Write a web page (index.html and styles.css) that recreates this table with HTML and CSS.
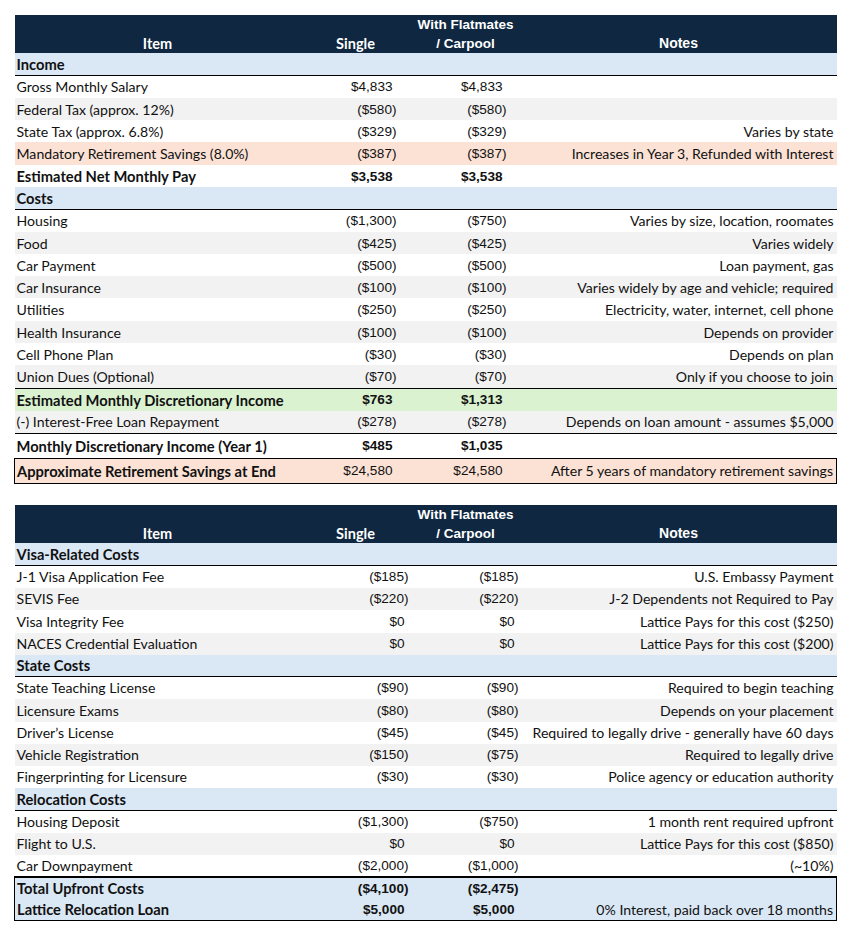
FILE: index.html
```html
<!DOCTYPE html>
<html>
<head>
<meta charset="utf-8">
<link rel="stylesheet" href="styles.css">
</head>
<body>
<div class="page">
<table class="sheet t1">
  <colgroup><col class="c-item"><col class="c-single"><col class="c-flat"><col class="c-notes"></colgroup>
  <thead>
    <tr class="hdr"><th class="h-aptos">Item</th><th class="h-aptos">Single</th><th class="h-arial">With Flatmates<br>/ Carpool</th><th class="h-arial">Notes</th></tr>
  </thead>
  <tbody>
    <tr class="sec h22"><td class="lbl b" colspan="4">Income</td></tr>
    <tr class="h23"><td class="lbl">Gross Monthly Salary</td><td class="num pos">$4,833</td><td class="num pos">$4,833</td><td class="note"></td></tr>
    <tr class="gray h22"><td class="lbl">Federal Tax (approx. 12%)</td><td class="num">($580)</td><td class="num">($580)</td><td class="note"></td></tr>
    <tr class="h22"><td class="lbl">State Tax (approx. 6.8%)</td><td class="num">($329)</td><td class="num">($329)</td><td class="note">Varies by state</td></tr>
    <tr class="pink h23"><td class="lbl">Mandatory Retirement Savings (8.0%)</td><td class="num">($387)</td><td class="num">($387)</td><td class="note">Increases in Year 3, Refunded with Interest</td></tr>
    <tr class="h22"><td class="lbl b">Estimated Net Monthly Pay</td><td class="num pos b">$3,538</td><td class="num pos b">$3,538</td><td class="note"></td></tr>
    <tr class="sec h22"><td class="lbl b" colspan="4">Costs</td></tr>
    <tr class="h23"><td class="lbl">Housing</td><td class="num">($1,300)</td><td class="num">($750)</td><td class="note">Varies by size, location, roomates</td></tr>
    <tr class="gray h22"><td class="lbl">Food</td><td class="num">($425)</td><td class="num">($425)</td><td class="note">Varies widely</td></tr>
    <tr class="h22"><td class="lbl">Car Payment</td><td class="num">($500)</td><td class="num">($500)</td><td class="note">Loan payment, gas</td></tr>
    <tr class="gray h22"><td class="lbl">Car Insurance</td><td class="num">($100)</td><td class="num">($100)</td><td class="note">Varies widely by age and vehicle; required</td></tr>
    <tr class="h23"><td class="lbl">Utilities</td><td class="num">($250)</td><td class="num">($250)</td><td class="note">Electricity, water, internet, cell phone</td></tr>
    <tr class="gray h22"><td class="lbl">Health Insurance</td><td class="num">($100)</td><td class="num">($100)</td><td class="note">Depends on provider</td></tr>
    <tr class="h22"><td class="lbl">Cell Phone Plan</td><td class="num">($30)</td><td class="num">($30)</td><td class="note">Depends on plan</td></tr>
    <tr class="gray h23 line"><td class="lbl">Union Dues (Optional)</td><td class="num">($70)</td><td class="num">($70)</td><td class="note">Only if you choose to join</td></tr>
    <tr class="green h23"><td class="lbl b">Estimated Monthly Discretionary Income</td><td class="num pos b">$763</td><td class="num pos b">$1,313</td><td class="note"></td></tr>
    <tr class="gray h22 line"><td class="lbl">(-) Interest-Free Loan Repayment</td><td class="num">($278)</td><td class="num">($278)</td><td class="note">Depends on loan amount - assumes $5,000</td></tr>
    <tr class="h25"><td class="lbl b">Monthly Discretionary Income (Year 1)</td><td class="num pos b">$485</td><td class="num pos b">$1,035</td><td class="note"></td></tr>
    <tr class="pink h25 boxed"><td class="lbl b">Approximate Retirement Savings at End</td><td class="num pos">$24,580</td><td class="num pos">$24,580</td><td class="note">After 5 years of mandatory retirement savings</td></tr>
  </tbody>
</table>

<table class="sheet t2">
  <colgroup><col class="c-item"><col class="c-single"><col class="c-flat"><col class="c-notes"></colgroup>
  <thead>
    <tr class="hdr"><th class="h-aptos">Item</th><th class="h-aptos">Single</th><th class="h-arial">With Flatmates<br>/ Carpool</th><th class="h-arial">Notes</th></tr>
  </thead>
  <tbody>
    <tr class="sec h23"><td class="lbl b" colspan="4">Visa-Related Costs</td></tr>
    <tr class="h22"><td class="lbl">J-1 Visa Application Fee</td><td class="num">($185)</td><td class="num">($185)</td><td class="note">U.S. Embassy Payment</td></tr>
    <tr class="gray h22"><td class="lbl">SEVIS Fee</td><td class="num">($220)</td><td class="num">($220)</td><td class="note">J-2 Dependents not Required to Pay</td></tr>
    <tr class="h23"><td class="lbl">Visa Integrity Fee</td><td class="num pos">$0</td><td class="num pos">$0</td><td class="note">Lattice Pays for this cost ($250)</td></tr>
    <tr class="gray h22"><td class="lbl">NACES Credential Evaluation</td><td class="num pos">$0</td><td class="num pos">$0</td><td class="note">Lattice Pays for this cost ($200)</td></tr>
    <tr class="sec h22"><td class="lbl b" colspan="4">State Costs</td></tr>
    <tr class="h22"><td class="lbl">State Teaching License</td><td class="num">($90)</td><td class="num">($90)</td><td class="note">Required to begin teaching</td></tr>
    <tr class="gray h23"><td class="lbl">Licensure Exams</td><td class="num">($80)</td><td class="num">($80)</td><td class="note">Depends on your placement</td></tr>
    <tr class="h22"><td class="lbl">Driver’s License</td><td class="num">($45)</td><td class="num">($45)</td><td class="note">Required to legally drive - generally have 60 days</td></tr>
    <tr class="gray h22"><td class="lbl">Vehicle Registration</td><td class="num">($150)</td><td class="num">($75)</td><td class="note">Required to legally drive</td></tr>
    <tr class="h22"><td class="lbl">Fingerprinting for Licensure</td><td class="num">($30)</td><td class="num">($30)</td><td class="note">Police agency or education authority</td></tr>
    <tr class="sec h23"><td class="lbl b" colspan="4">Relocation Costs</td></tr>
    <tr class="h22"><td class="lbl">Housing Deposit</td><td class="num">($1,300)</td><td class="num">($750)</td><td class="note">1 month rent required upfront</td></tr>
    <tr class="gray h22"><td class="lbl">Flight to U.S.</td><td class="num pos">$0</td><td class="num pos">$0</td><td class="note">Lattice Pays for this cost ($850)</td></tr>
    <tr class="h22"><td class="lbl">Car Downpayment</td><td class="num">($2,000)</td><td class="num">($1,000)</td><td class="note">(~10%)</td></tr>
    <tr class="blue h22 tot-top"><td class="lbl b">Total Upfront Costs</td><td class="num b">($4,100)</td><td class="num b">($2,475)</td><td class="note"></td></tr>
    <tr class="blue h22 tot-bot"><td class="lbl b">Lattice Relocation Loan</td><td class="num pos b">$5,000</td><td class="num pos b">$5,000</td><td class="note">0% Interest, paid back over 18 months</td></tr>
  </tbody>
</table>
</div>
</body>
</html>
```

FILE: styles.css
```css
html, body {
  margin: 0;
  padding: 0;
  background: #ffffff;
}

.page {
  padding: 15px 14px 0 14px;
  display: flex;
  flex-direction: column;
  gap: 21px;
  width: 822px;
}

.sheet {
  border-collapse: collapse;
  table-layout: fixed;
  width: 822px;
  color: #111111;
}

.c-item { width: 286px; }
.c-single { width: 110px; }
.c-flat { width: 110px; }
.c-notes { width: 316px; }

.sheet td, .sheet th {
  padding: 0;
  white-space: nowrap;
  overflow: visible;
}

.hdr {
  height: 38px;
  background: #0f2740;
}

.hdr th {
  color: #ffffff;
  vertical-align: bottom;
  text-align: center;
  line-height: 19px;
  padding-bottom: 0;
}

.h-aptos {
  font-family: Lato, "Liberation Sans", sans-serif;
  font-weight: 700;
  font-size: 14.5px;
}

.h-arial {
  font-family: "Liberation Sans", Arial, sans-serif;
  font-weight: 700;
  font-size: 13.5px;
}

.h-arial:last-child {
  font-size: 14px;
}

.h22 { height: 22px; }
.h23 { height: 23px; }
.h25 { height: 25px; }

.lbl {
  font-family: Lato, "Liberation Sans", sans-serif;
  font-size: 14.1px;
  padding-left: 2px !important;
  text-align: left;
}

.lbl.b {
  font-weight: 700;
  font-size: 14.7px;
}

.note {
  font-family: Lato, "Liberation Sans", sans-serif;
  font-size: 14.1px;
  text-align: right;
  padding-right: 3px !important;
}

.num {
  font-family: "Liberation Sans", Arial, sans-serif;
  font-size: 13.6px;
  text-align: right;
}

.num.b { font-weight: 700; }

.t1 .num { padding-right: 14px !important; }
.t1 .num.pos { padding-right: 18px !important; }
.t2 .num { padding-right: 2px !important; }
.t2 .num.pos { padding-right: 6px !important; }

.sec { background: #dae8f6; }
.sec td { border-bottom: 1px solid #000000; }

.gray { background: #f2f2f2; }
.pink { background: #fbe2d5; }
.green { background: #daf2d0; }
.blue { background: #dae8f6; }

.line td { border-bottom: 1px solid #000000; }

.boxed td {
  border-top: 1px solid #000000;
  border-bottom: 1px solid #000000;
}
.boxed td:first-child { border-left: 1px solid #000000; }
.boxed td:last-child { border-right: 1px solid #000000; }

.tot-top td { border-top: 2px solid #000000; }
.tot-top td:first-child, .tot-bot td:first-child { border-left: 1px solid #000000; }
.tot-top td:last-child, .tot-bot td:last-child { border-right: 1px solid #000000; }
.tot-bot td { border-bottom: 1px solid #000000; }
```
